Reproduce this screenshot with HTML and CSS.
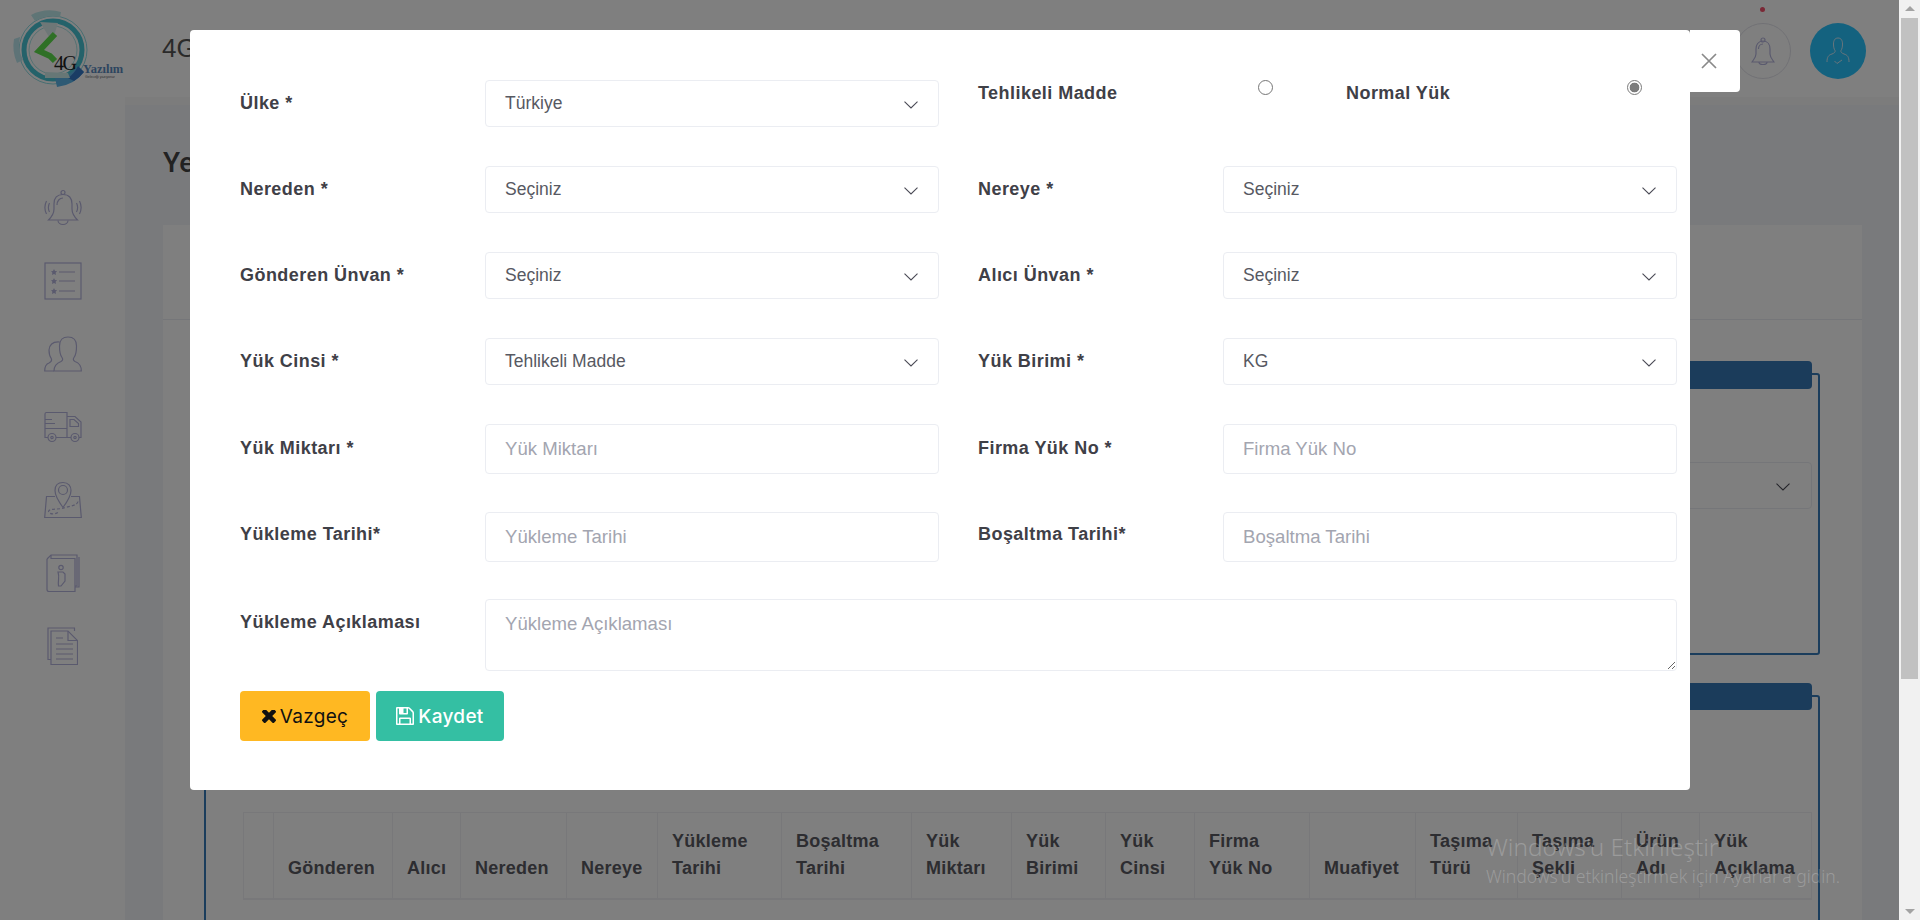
FILE: index.html
```html
<!DOCTYPE html>
<html lang="tr">
<head>
<meta charset="utf-8">
<title>4G Yazılım</title>
<link rel="stylesheet" href="styles.css">
</head>
<body>
<div class="screen">
  <div class="viewport">
    <header class="topbar">
      <div class="logo-cell">
        <svg class="logo" viewBox="0 0 125 105" width="125" height="105">
          <circle cx="53" cy="50" r="34" fill="none" stroke="#8fdde4" stroke-width="1"/>
          <circle cx="53" cy="50" r="29" fill="none" stroke="#49c4d4" stroke-width="5"/>
          <circle cx="53" cy="50" r="24" fill="none" stroke="#a8e4e6" stroke-width="1"/>
          <path d="M31 15 A41 41 0 0 1 61 12 L60 17 A35 35 0 0 0 35 21Z" fill="#bfeaec"/>
          <path d="M40 22 L58 23 L52 42Z" fill="#dceeee"/>
          <path d="M14 39 L20 37 A33 33 0 0 0 23 60 L17 63 A41 41 0 0 1 14 39Z" fill="#bce6ee"/>
          <path d="M55 78 A29 29 0 0 0 78 66 L84 72 A39 39 0 0 1 57 87Z" fill="#5cb4e8"/>
          <path d="M68 78 A30 30 0 0 0 78 66 L84 72 A39 39 0 0 1 74 81Z" fill="#3478c8"/>
          <path d="M45 72 L68 73 L70 78 L45 78Z" fill="#cfeeec"/>
          <path d="M55 34 L39 51 L50 56 L55 61" fill="none" stroke="#5ee04c" stroke-width="6"/>
          <text class="logo-4g" x="54" y="70">4G</text>
          <text class="logo-name" x="83" y="73">Yazılım</text>
          <text class="logo-sub" x="85" y="78">Geleceği yazıyoruz</text>
        </svg>
      </div>
      <div class="brand">4G Yazılım</div>
      <div class="top-actions">
        <div class="top-bell">
          <span class="red-dot"></span>
          <svg viewBox="0 0 24 28" width="24" height="28" class="line-icon">
            <circle cx="12" cy="3" r="2"/>
            <path d="M12 4C7 4 5 8 5 12V17C5 20 3 22 1 25H23C21 22 19 20 19 17V12C19 8 17 4 12 4Z"/>
            <path d="M8 25a4 2.500 0 0 0 8 0"/>
            <path d="M7.500 12C7.500 9 9.500 7 12 7"/>
          </svg>
        </div>
        <div class="top-user">
          <svg viewBox="0 0 24 28" width="24" height="28" class="user-icon">
            <path d="M12 1C8.500 1 7.500 4 7.500 7C7.500 10 8 12 9 13.500C9.500 15 8.500 16 6 17C2.500 18 1 20 1 25M12 1C15.500 1 16.500 4 16.500 7C16.500 10 16 12 15 13.500C14.500 15 15.500 16 18 17C21.500 18 23 20 23 25"/>
            <path d="M8.500 24L11 26.500L16 23"/>
          </svg>
        </div>
      </div>
    </header>

    <div class="layout">
      <nav class="sidebar">
        <svg class="line-icon" viewBox="0 0 38 36" width="38" height="36">
          <circle cx="19" cy="2.500" r="2"/>
          <path d="M19 4.500C13 4.500 10 8 10 14V19C10 24 7.500 27 4.500 30H33.500C30.500 27 28 24 28 19V14C28 8 25 4.500 19 4.500Z"/>
          <path d="M14 30.500a5 4 0 0 0 10 0"/>
          <path d="M13 15C13 11 15.500 8 19 8"/>
          <path d="M5.500 13C4 16 4 19 5.500 22M2.500 11C.5 15 .5 20 2.500 24M32.500 13C34 16 34 19 32.500 22M35.500 11C37.500 15 37.500 20 35.500 24"/>
        </svg>
        <svg class="line-icon" viewBox="0 0 38 38" width="38" height="38">
          <rect x="1" y="1" width="36" height="36"/>
          <path d="M15 10H31M15 19H31M15 29H31"/>
          <path class="solid" d="M10 7l1 2 2.200.3-1.600 1.500.4 2.200-2-1-2 1 .4-2.200L7 9.300 9 9zM10 16l1 2 2.200.3-1.600 1.500.4 2.200-2-1-2 1 .4-2.200L7 18.300 9 18zM10 26l1 2 2.200.3-1.600 1.500.4 2.200-2-1-2 1 .4-2.200L7 28.300 9 28z"/>
        </svg>
        <svg class="line-icon" viewBox="0 0 38 36" width="38" height="36">
          <path d="M10 35C10 29 13 27 17 25.500C19 24.500 19 23 18 21.500C16 19 15.500 15 15.500 10C15.500 4 19 1 24 1S32.500 4 32.500 10C32.500 15 32 19 30 21.500C29 23 29 24.500 31 25.500C35 27 37.300 29 37.300 35Z"/>
          <path d="M15.500 6C9 5.500 5.500 9 5 14C5 18 6 21 7.500 23C8 25 7 26 5 27C2 28 .7 30 .7 35H10"/>
        </svg>
        <svg class="line-icon" viewBox="0 0 38 31" width="38" height="31">
          <path d="M4 26H1V2.500Q1 1 2.500 1H23V26H12M1 17H23M1 8H8M1 12H11"/>
          <path d="M23 5H31L37 10.500V26H35M23 26H27"/>
          <path d="M26 8H30L34.500 12V15H26Z"/>
          <circle cx="8" cy="26" r="4"/><circle cx="8" cy="26" r="1.200"/>
          <circle cx="31" cy="26" r="4"/><circle cx="31" cy="26" r="1.200"/>
        </svg>
        <svg class="line-icon" viewBox="0 0 38 37" width="38" height="37">
          <path d="M19 1C13.500 1 11 4.500 11 9C11 15 19 26 19 26S27 15 27 9C27 4.500 24.500 1 19 1Z"/>
          <circle cx="19" cy="8.500" r="4.500"/>
          <path d="M11 15H2.500L.7 36H37.300L35.500 15H27"/>
          <path stroke-dasharray="3 2" d="M34 20C33 25 22 25 18 27C12 28 5 27 4.500 30C5 33 11 33 14 31"/>
        </svg>
        <svg class="line-icon" viewBox="0 0 34 38" width="34" height="38">
          <path d="M1 5L5 1H31V32H29"/>
          <path d="M33 3V33H29"/>
          <path d="M5 1V4.500H29V37.500H3Q1 37.500 1 35.500V5"/>
          <circle cx="15" cy="13.500" r="2.200"/>
          <path d="M12 18H17L19 20V27L15 32H12.500C11.500 26 14 24 12 18Z"/>
        </svg>
        <svg class="line-icon" viewBox="0 0 31 38" width="31" height="38">
          <path d="M4 32.500H1V1H27.500V4"/>
          <path d="M4 4H21L30.500 13.500V37.500H4Z"/>
          <path d="M21 4V13.500H30.500"/>
          <path d="M9 11H16M9 17H26M9 22H26M9 27H26M9 32H26"/>
        </svg>
      </nav>

      <main class="content">
        <h1 class="page-title">Yeni Yük</h1>
        <section class="card">
          <div class="card-head"></div>
          <div class="card-body">
            <div class="group group-first">
              <div class="group-bar"></div>
              <div class="group-form">
                <div class="bg-select">
                  <svg class="chevron" viewBox="0 0 14 8" width="14" height="8"><path d="M.5.7L7 7 13.500.7"/></svg>
                </div>
              </div>
            </div>
            <div class="group">
              <div class="group-bar group-bar-second"></div>
              <table class="data-table">
                <colgroup>
                  <col class="c30"><col class="c119"><col class="c68"><col class="c106"><col class="c91"><col class="c124"><col class="c130"><col class="c100"><col class="c94"><col class="c89"><col class="c115"><col class="c106"><col class="c102"><col class="c104"><col class="c78"><col class="c112">
                </colgroup>
                <thead>
                  <tr>
                    <th></th><th>Gönderen</th><th>Alıcı</th><th>Nereden</th><th>Nereye</th>
                    <th>Yükleme Tarihi</th><th>Boşaltma Tarihi</th><th>Yük Miktarı</th><th>Yük Birimi</th><th>Yük Cinsi</th>
                    <th>Firma<br>Yük No</th><th>Muafiyet</th><th>Taşıma Türü</th><th>Taşıma Şekli</th><th>Ürün Adı</th><th>Yük Açıklama</th>
                  </tr>
                </thead>
              </table>
            </div>
          </div>
        </section>
      </main>
    </div>

    <div class="overlay"></div>

    <div class="modal">
      <button class="close" type="button" aria-label="Kapat">
        <svg viewBox="0 0 16 16" width="16" height="16"><path d="M1 1L15 15M15 1L1 15"/></svg>
      </button>
      <div class="row">
        <div class="field">
          <label class="label">Ülke *</label>
          <div class="select"><span>Türkiye</span><svg class="chevron" viewBox="0 0 14 8" width="14" height="8"><path d="M.5.7L7 7 13.500.7"/></svg></div>
        </div>
        <div class="radio-field">
          <label class="radio-label">Tehlikeli Madde</label>
          <input class="radio" type="radio" name="yuk">
          <label class="radio-label">Normal Yük</label>
          <input class="radio" type="radio" name="yuk" checked>
        </div>
      </div>
      <div class="row">
        <div class="field">
          <label class="label">Nereden *</label>
          <div class="select"><span>Seçiniz</span><svg class="chevron" viewBox="0 0 14 8" width="14" height="8"><path d="M.5.7L7 7 13.500.7"/></svg></div>
        </div>
        <div class="field">
          <label class="label">Nereye *</label>
          <div class="select"><span>Seçiniz</span><svg class="chevron" viewBox="0 0 14 8" width="14" height="8"><path d="M.5.7L7 7 13.500.7"/></svg></div>
        </div>
      </div>
      <div class="row">
        <div class="field">
          <label class="label">Gönderen Ünvan *</label>
          <div class="select"><span>Seçiniz</span><svg class="chevron" viewBox="0 0 14 8" width="14" height="8"><path d="M.5.7L7 7 13.500.7"/></svg></div>
        </div>
        <div class="field">
          <label class="label">Alıcı Ünvan *</label>
          <div class="select"><span>Seçiniz</span><svg class="chevron" viewBox="0 0 14 8" width="14" height="8"><path d="M.5.7L7 7 13.500.7"/></svg></div>
        </div>
      </div>
      <div class="row">
        <div class="field">
          <label class="label">Yük Cinsi *</label>
          <div class="select"><span>Tehlikeli Madde</span><svg class="chevron" viewBox="0 0 14 8" width="14" height="8"><path d="M.5.7L7 7 13.500.7"/></svg></div>
        </div>
        <div class="field">
          <label class="label">Yük Birimi *</label>
          <div class="select"><span>KG</span><svg class="chevron" viewBox="0 0 14 8" width="14" height="8"><path d="M.5.7L7 7 13.500.7"/></svg></div>
        </div>
      </div>
      <div class="row row-tall">
        <div class="field">
          <label class="label label-low">Yük Miktarı *</label>
          <input class="input" type="text" placeholder="Yük Miktarı">
        </div>
        <div class="field">
          <label class="label label-low">Firma Yük No *</label>
          <input class="input" type="text" placeholder="Firma Yük No">
        </div>
      </div>
      <div class="row row-tall row-date">
        <div class="field">
          <label class="label label-high">Yükleme Tarihi*</label>
          <input class="input" type="text" placeholder="Yükleme Tarihi">
        </div>
        <div class="field">
          <label class="label label-high">Boşaltma Tarihi*</label>
          <input class="input" type="text" placeholder="Boşaltma Tarihi">
        </div>
      </div>
      <div class="note-row">
        <label class="label">Yükleme Açıklaması</label>
        <textarea class="textarea" placeholder="Yükleme Açıklaması"></textarea>
      </div>
      <div class="actions">
        <button class="btn btn-cancel" type="button">
          <svg viewBox="110 346 1188 1100" width="14" height="13"><path d="M1298 1214q0 40-28 68l-136 136q-28 28-68 28t-68-28l-294-294-294 294q-28 28-68 28t-68-28l-136-136q-28-28-28-68t28-68l294-294-294-294q-28-28-28-68t28-68l136-136q28-28 68-28t68 28l294 294 294-294q28-28 68-28t68 28l136 136q28 28 28 68t-28 68l-294 294 294 294q28 28 28 68z"/></svg>
          <span>Vazgeç</span>
        </button>
        <button class="btn btn-save" type="button">
          <svg viewBox="0 128 1536 1536" width="18" height="18"><path d="M384 1536h768v-384h-768v384zm896 0h128v-896q0-14-10-38.500t-20-34.500l-281-281q-10-10-34-20t-39-10v416q0 40-28 68t-68 28h-576q-40 0-68-28t-28-68v-416h-128v1280h128v-416q0-40 28-68t68-28h832q40 0 68 28t28 68v416zm-384-928v-320q0-13-9.500-22.500t-22.500-9.500h-192q-13 0-22.500 9.500t-9.500 22.500v320q0 13 9.500 22.500t22.500 9.500h192q13 0 22.500-9.500t9.500-22.500zm640 32v928q0 40-28 68t-68 28h-1344q-40 0-68-28t-28-68v-1344q0-40 28-68t68-28h928q40 0 88 20t76 48l280 280q28 28 48 76t20 88z"/></svg>
          <span>Kaydet</span>
        </button>
      </div>
    </div>

    <div class="watermark">
      <div class="wm-title">Windows'u Etkinleştir</div>
      <div class="wm-sub">Windows'u etkinleştirmek için Ayarlar'a gidin.</div>
    </div>
  </div>

  <aside class="scrollbar">
    <span class="arrow-up"></span>
    <div class="thumb"></div>
    <span class="arrow-down"></span>
  </aside>
</div>
</body>
</html>
```

FILE: styles.css
```css
* { box-sizing: border-box; }
html, body { margin: 0; padding: 0; height: 100%; overflow: hidden; }
body { font-family: "Liberation Sans", Arial, sans-serif; color: #3f4047; }

.screen { display: flex; width: 1920px; height: 920px; }
.viewport { position: relative; width: 1899px; height: 920px; overflow: hidden; background: #f3f4f8; display: flex; flex-direction: column; }

/* top bar */
.topbar { display: flex; align-items: center; height: 105px; flex: none; background: #fff; border-bottom: 8px solid #f8f8f8; }
.logo-cell { width: 125px; height: 105px; margin-bottom: -8px; background: #fff; flex: none; align-self: flex-start; }
.logo { display: block; }
.logo-4g { font: 400 20px "Liberation Serif", serif; letter-spacing: -1.500px; fill: #222; }
.logo-name { font: 700 12.500px "Liberation Serif", serif; fill: #5b8ac0; }
.logo-sub { font: 400 3.500px "Liberation Sans", sans-serif; fill: #666; }
.brand { margin-left: 37px; font-size: 26px; color: #555; }
.top-actions { margin-left: auto; margin-right: 33px; padding-top: 5px; display: flex; gap: 19px; align-items: center; }
.top-bell { position: relative; width: 56px; height: 56px; border: 1px solid #e2e2ea; border-radius: 50%; display: flex; align-items: center; justify-content: center; }
.red-dot { position: absolute; top: -17px; left: 24px; width: 5px; height: 5px; border-radius: 50%; background: #f4516c; }
.top-user { width: 56px; height: 56px; border-radius: 50%; background: #29c4ff; display: flex; align-items: center; justify-content: center; }
.user-icon { fill: none; stroke: #cfeaf7; stroke-width: 1; }

.line-icon { fill: none; stroke: #b5b4dc; stroke-width: 1.200; display: block; }
.line-icon .solid { fill: #b5b4dc; stroke: none; }

/* sidebar */
.layout { display: flex; flex: 1; min-height: 0; }
.sidebar { width: 125px; flex: none; background: #fff; display: flex; flex-direction: column; align-items: center; padding-top: 84px; gap: 35px; }
.sidebar svg { height: 38px; flex: none; }

/* page behind */
.content { flex: 1; padding: 0 37px 0 38px; min-width: 0; }
.page-title { margin: 38px 0 0; height: 82px; font: 500 28px/40px Roboto, sans-serif; color: #444; }
.card { background: #fff; height: 700px; }
.card-head { height: 95px; border-bottom: 1px solid #ebedf2; }
.card-body { padding: 53px 42px 0 41px; display: flex; flex-direction: column; gap: 40px; }
.group { border: 2px solid #367ab8; border-radius: 3px; padding: 0 0 0 37px; height: 400px; }
.group-first { height: 282px; }
.group-bar { height: 28px; margin: -14px 6px 0 -18px; background: #3679b6; border-radius: 4px; }
.group-bar-second { height: 27px; margin-bottom: 1px; }
.group-form { display: flex; justify-content: flex-end; margin: 73px 6px 0 0; }
.bg-select { width: 600px; height: 47px; border: 1px solid #ebedf2; border-radius: 4px; display: flex; align-items: center; justify-content: flex-end; padding-right: 21px; }
.chevron { fill: none; stroke: #4a4a55; stroke-width: 1.100; flex: none; margin-top: 2px; }

.data-table { margin-top: 102px; border-collapse: collapse; table-layout: fixed; width: 1568px; }
.data-table th { border: 1px solid #f0f1f5; border-bottom-width: 2px; padding: 15px 8px 16px 14px; height: 86px; vertical-align: bottom; text-align: left; font-size: 18px; line-height: 27px; font-weight: 700; letter-spacing: .25px; color: #5a5a62; }
.c30 { width: 30px; } .c119 { width: 119px; } .c68 { width: 68px; } .c106 { width: 106px; } .c91 { width: 91px; }
.c124 { width: 124px; } .c130 { width: 130px; } .c100 { width: 100px; } .c94 { width: 94px; } .c89 { width: 89px; }
.c115 { width: 115px; } .c102 { width: 102px; } .c104 { width: 104px; } .c78 { width: 78px; } .c112 { width: 112px; }

/* dim layer */
.overlay { position: absolute; inset: 0; background: rgba(0, 0, 0, .5); }

/* modal */
.modal { position: absolute; left: 190px; top: 30px; width: 1500px; height: 760px; background: #fff; border-radius: 4px; padding: 50px 0 0 50px; }
.close { position: absolute; left: 100%; top: 0; width: 50px; height: 62px; padding: 0 12px 0 0; margin: 0; border: 0; background: #fff; border-radius: 0 4px 4px 0; display: flex; align-items: center; justify-content: center; }
.close svg { fill: none; stroke: #8a8a8a; stroke-width: 1.700; }

.row { display: flex; gap: 39px; height: 47px; margin-bottom: 39px; }
.row-tall { height: 50px; margin-bottom: 38px; }
.row-date { margin-bottom: 37px; }
.field { display: grid; grid-template-columns: 245px 454px; align-items: start; }
.label, .radio-label { font-size: 18px; line-height: 27px; font-weight: 700; color: #3f4047; letter-spacing: .45px; }
.label { padding-top: 10px; }
.label-low { padding-top: 11px; }
.label-high { padding-top: 9px; }

.select, .input, .textarea { border: 1px solid #ebedf2; border-radius: 4px; background: #fff; font-family: "Liberation Sans", Arial, sans-serif; font-size: 17.500px; color: #575962; width: 454px; }
.select { height: 47px; display: flex; align-items: center; justify-content: space-between; padding: 0 20px 0 19px; }
.input { height: 50px; padding: 0 19px; font-size: 18.600px; }
.input::placeholder, .textarea::placeholder { color: #a3a5b0; opacity: 1; }

.radio-field { display: grid; grid-template-columns: 280px 88px 281px 15px; align-items: start; }
.radio { appearance: none; width: 15px; height: 15px; margin: 0; border: 1px solid #767676; border-radius: 50%; background: #fff; }
.radio:checked { border-color: #7a7a7a; background: radial-gradient(circle, #7c7c7c 0, #7c7c7c 4.500px, #fff 5.200px); }

.note-row { display: grid; grid-template-columns: 245px 1192px; align-items: start; }
.textarea { display: block; width: 1192px; height: 72px; padding: 10px 19px; font-size: 18.600px; line-height: 27px; resize: vertical; outline: none; }

.actions { display: flex; gap: 6px; margin-top: 20px; }
.btn { display: flex; align-items: center; justify-content: center; gap: 4px; height: 50px; border: 0; padding: 0; border-radius: 4px; font-family: Inter, sans-serif; font-size: 19px; letter-spacing: .3px; font-weight: 400; }
.btn-cancel { width: 130px; background: #ffb822; color: #111; }
.btn-cancel svg { fill: #111; }
.btn-save { width: 128px; background: #34bfa3; color: #fff; font-weight: 500; }
.btn-save svg { fill: #fff; }

/* activation notice */
.watermark { position: absolute; left: 1486px; top: 831px; color: rgba(255, 255, 255, .22); font-family: "Noto Sans", sans-serif; white-space: nowrap; }
.wm-title { font-size: 24.300px; line-height: 32px; font-weight: 300; }
.wm-sub { font-size: 17.500px; line-height: 26px; font-weight: 300; }

/* scrollbar */
.scrollbar { position: relative; width: 21px; height: 920px; background: #f1f1f1; display: flex; flex-direction: column; align-items: center; }
.arrow-up { width: 0; height: 0; margin-top: 6px; border: 5px solid transparent; border-top: 0; border-bottom: 5px solid #a3a3a3; }
.thumb { width: 17px; height: 661px; margin-top: 7px; background: #c1c1c1; }
.arrow-down { width: 0; height: 0; margin-top: auto; margin-bottom: 6px; border: 5px solid transparent; border-bottom: 0; border-top: 5px solid #a3a3a3; }
```
